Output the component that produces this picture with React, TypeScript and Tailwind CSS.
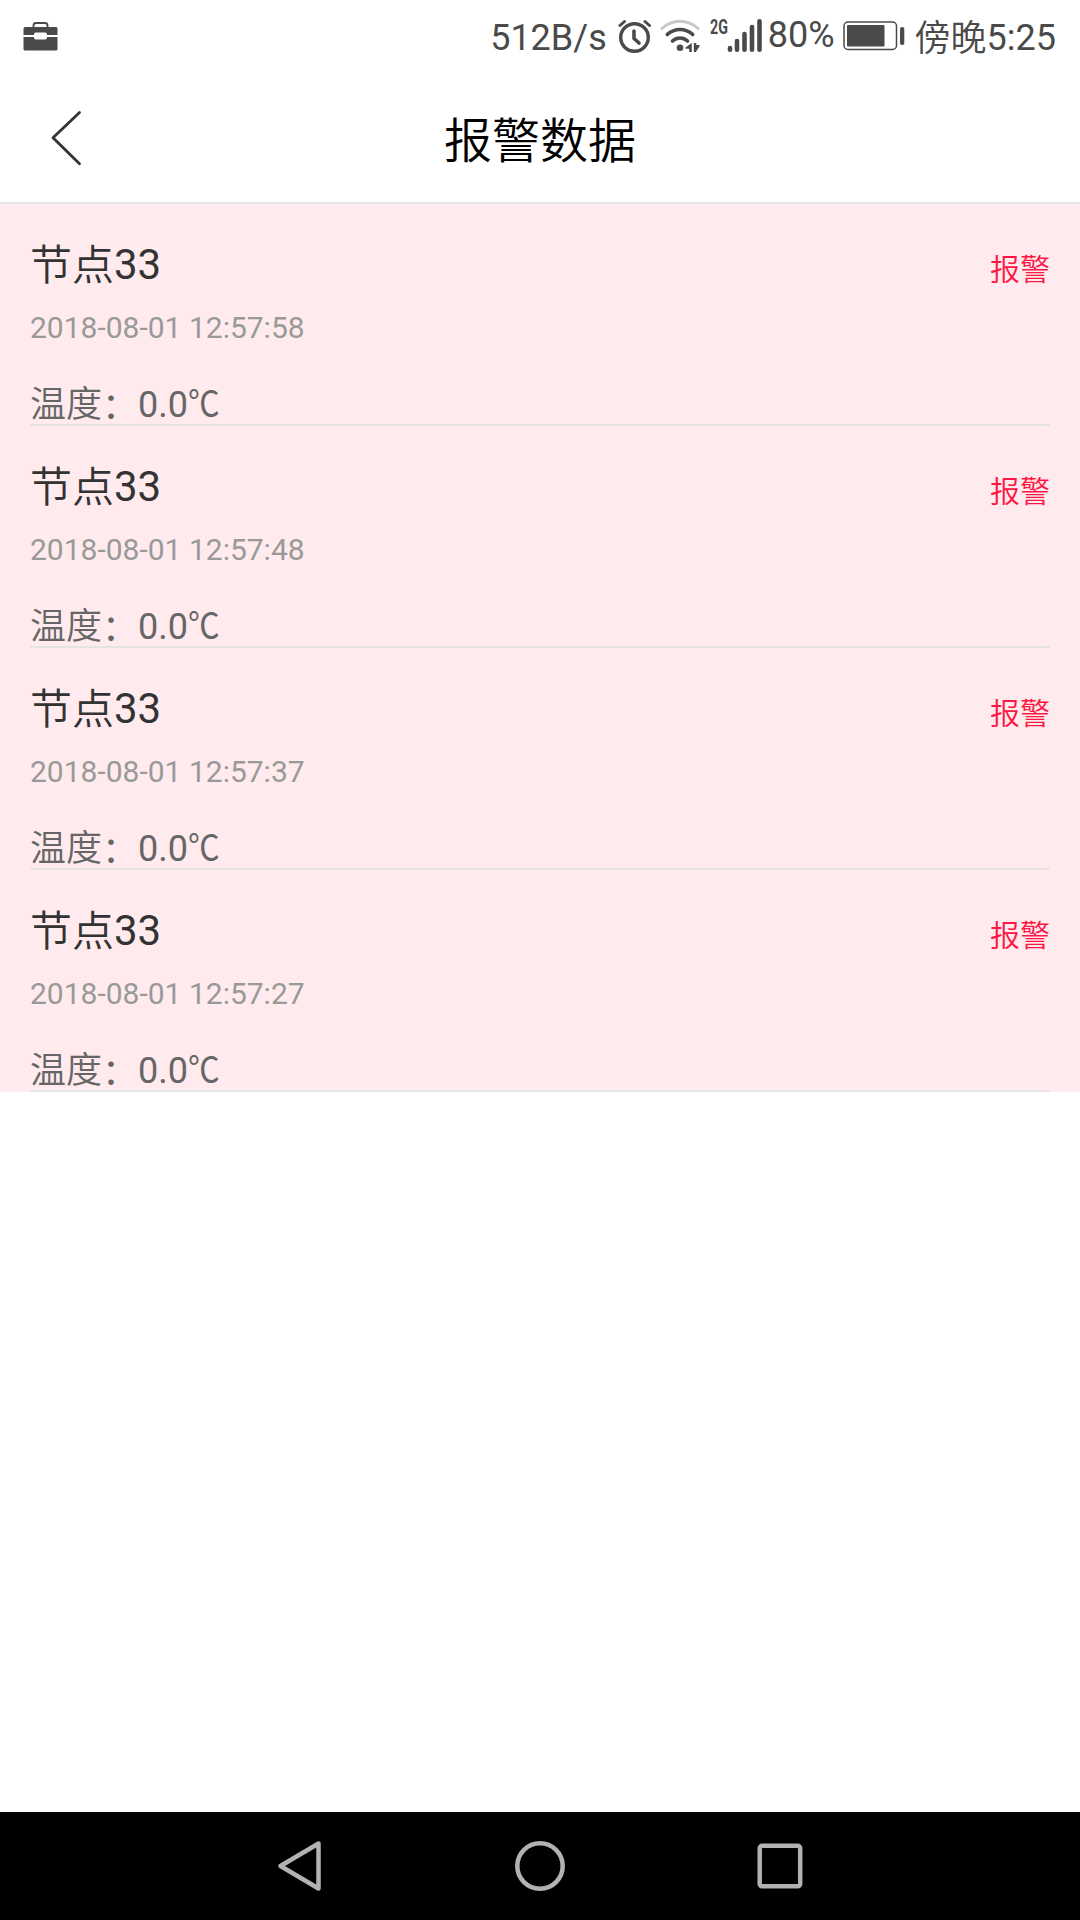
import React from 'react';

const alarms = [
  { id: 1, node: '节点', number: '33', time: '2018-08-01 12:57:58', temperature: '0.0' },
  { id: 2, node: '节点', number: '33', time: '2018-08-01 12:57:48', temperature: '0.0' },
  { id: 3, node: '节点', number: '33', time: '2018-08-01 12:57:37', temperature: '0.0' },
  { id: 4, node: '节点', number: '33', time: '2018-08-01 12:57:27', temperature: '0.0' },
];

function BriefcaseIcon() {
  return (
    <svg width="36" height="32" viewBox="0 0 36 32" fill="#4a4a4a">
      <path d="M10.5 7V4.5a2.5 2.5 0 0 1 2.5-2.5h9a2.5 2.5 0 0 1 2.5 2.5V7" fill="none" stroke="#4a4a4a" strokeWidth="1.8" />
      <path d="M2 6h31a1.5 1.5 0 0 1 1.5 1.5V14H24v-.5a2 2 0 0 0-2-2h-9a2 2 0 0 0-2 2v.5H.5V7.5A1.5 1.5 0 0 1 2 6z" />
      <path d="M.5 16H11a2 2 0 0 0 2 2.5h9a2 2 0 0 0 2-2.5h10.5v12a1.5 1.5 0 0 1-1.5 1.5H2A1.5 1.5 0 0 1 .5 28z" />
    </svg>
  );
}

function AlarmIcon() {
  return (
    <svg width="34" height="34" viewBox="0 0 34 34" fill="none" stroke="#4a4a4a" strokeLinecap="round" strokeLinejoin="round">
      <circle cx="16.5" cy="18.5" r="13.8" strokeWidth="3.4" />
      <path d="M16 12v7.5l5 4.5" strokeWidth="3.6" />
      <path d="M2 6.5 6.5 2.5M27 2.5l4.5 4" strokeWidth="3" />
    </svg>
  );
}

function WifiIcon() {
  return (
    <svg width="40" height="34" viewBox="0 0 40 34" fill="none" stroke="#4a4a4a" strokeLinecap="round">
      <path d="M2 9.5C12-.3 28-.3 38 9.5" stroke="#c8c8c8" strokeWidth="3" />
      <path d="M7.3 15.5C14.5 8.8 25.5 8.8 32.7 15.5" strokeWidth="3.6" />
      <path d="M12.5 22c4.3-4 10.7-4 15 0" strokeWidth="3.6" />
      <circle cx="20" cy="28.8" r="3.3" fill="#4a4a4a" stroke="none" />
      <path d="M31.8 24v9h-2.6v-3.3h-3.7v-1.2zM33.8 24v9h2l3.7-5.5V26h-3.2v-2z" fill="#4a4a4a" stroke="none" />
    </svg>
  );
}

function SignalIcon() {
  return (
    <svg width="36" height="34" viewBox="0 0 36 34" stroke="#4a4a4a" strokeWidth="4.6" strokeLinecap="round">
      <path d="M3 29v1.7M10 22v8.7M17.5 15v15.7M25 8v22.7M32.5 2.3v28.4" />
    </svg>
  );
}

function BatteryIcon() {
  return (
    <svg width="62" height="30" viewBox="0 0 62 30">
      <rect x="1" y="1" width="52.5" height="27.5" rx="4" fill="none" stroke="#4a4a4a" strokeWidth="1.5" />
      <rect x="4" y="4" width="37.5" height="21.5" rx="1" fill="#4a4a4a" />
      <rect x="57" y="6" width="4.3" height="18" rx="2" fill="#4a4a4a" />
    </svg>
  );
}

function StatusBar() {
  return (
    <div className="flex h-[72px] items-start justify-between pl-[23px] pr-[24px] text-[36px] leading-[42px] text-[#4a4a4a]">
      <div className="pt-[21px]">
        <BriefcaseIcon />
      </div>
      <div className="flex items-start">
        <span className="pt-[17px]">512B/s</span>
        <div className="ml-[11px] pt-[19px]">
          <AlarmIcon />
        </div>
        <div className="ml-[8px] pt-[19px]">
          <WifiIcon />
        </div>
        <span className="ml-[10px] w-[17px] origin-left scale-x-[0.68] pt-[17px] text-[21px] font-bold leading-[20px]">
          2G
        </span>
        <div className="pt-[19px]">
          <SignalIcon />
        </div>
        <span className="ml-[5px] pt-[14px]">80%</span>
        <div className="ml-[8px] pt-[20.5px]">
          <BatteryIcon />
        </div>
        <span className="ml-[10px] pt-[18px] font-[350]">傍晚</span>
        <span className="pt-[17px]">5:25</span>
      </div>
    </div>
  );
}

function Header() {
  return (
    <header className="grid h-[132px] grid-cols-[1fr_auto_1fr] items-start border-b-2 border-[#e5e5e5] text-black">
      <button className="w-fit pl-[50px] pt-[37px]" aria-label="返回">
        <svg width="34" height="58" viewBox="0 0 34 58" fill="none" stroke="#333" strokeWidth="2.8" strokeLinecap="round" strokeLinejoin="round">
          <path d="M29.5 3.5 3 28.7l26.5 26" />
        </svg>
      </button>
      <h1 className="pt-[38px] text-[48px] font-[350] leading-[64px]">报警数据</h1>
      <span />
    </header>
  );
}

interface AlarmItemProps {
  node: string;
  number: string;
  time: string;
  temperature: string;
}

function AlarmItem({ node, number, time, temperature }: AlarmItemProps) {
  return (
    <li className="bg-[#ffebee] px-[30px]">
      <div className="h-[222px] border-b-2 border-[#e5e5e5] pt-[33px]">
        <div className="flex items-start justify-between">
          <h2 className="flex text-[42px] leading-[56px] text-[#333]">
            <span className="pt-px font-[350]">{node}</span>
            <span>{number}</span>
          </h2>
          <span className="pt-[13px] text-[30px] font-[350] leading-[40px] text-[#ff1744]">报警</span>
        </div>
        <p className="mt-[14px] text-[30px] leading-[40px] text-[#999]">{time}</p>
        <p className="mt-[37px] flex text-[36px] leading-[40px] text-[#666]">
          <span className="font-[350]">温度</span>
          <span className="pt-[2px]">：</span>
          <span>{temperature}</span>
          <span className="origin-left scale-x-[0.88]">℃</span>
        </p>
      </div>
    </li>
  );
}

function NavBar() {
  return (
    <nav className="flex h-[108px] items-start justify-center bg-black pt-[28px]">
      <svg width="54" height="52" viewBox="0 0 54 52" fill="none" stroke="#b2b2b2" strokeWidth="4.5" strokeLinejoin="round">
        <path d="M7.5 26 45.5 3.500v45z" />
      </svg>
      <svg className="mx-[187px]" width="52" height="52" viewBox="0 0 52 52" fill="none" stroke="#b2b2b2" strokeWidth="4.5">
        <circle cx="26" cy="26" r="22.7" />
      </svg>
      <svg width="54" height="52" viewBox="0 0 54 52" fill="none" stroke="#b2b2b2" strokeWidth="4.5">
        <rect x="6.7" y="5.8" width="40.5" height="40.5" rx="2.5" />
      </svg>
    </nav>
  );
}

export default function App() {
  return (
    <div className="flex h-[1920px] w-[1080px] flex-col overflow-hidden bg-white font-['Roboto','Noto_Sans_CJK_SC',sans-serif]">
      <StatusBar />
      <Header />
      <ul className="flex-1">
        {alarms.map((alarm) => (
          <AlarmItem
            key={alarm.id}
            node={alarm.node}
            number={alarm.number}
            time={alarm.time}
            temperature={alarm.temperature}
          />
        ))}
      </ul>
      <NavBar />
    </div>
  );
}
